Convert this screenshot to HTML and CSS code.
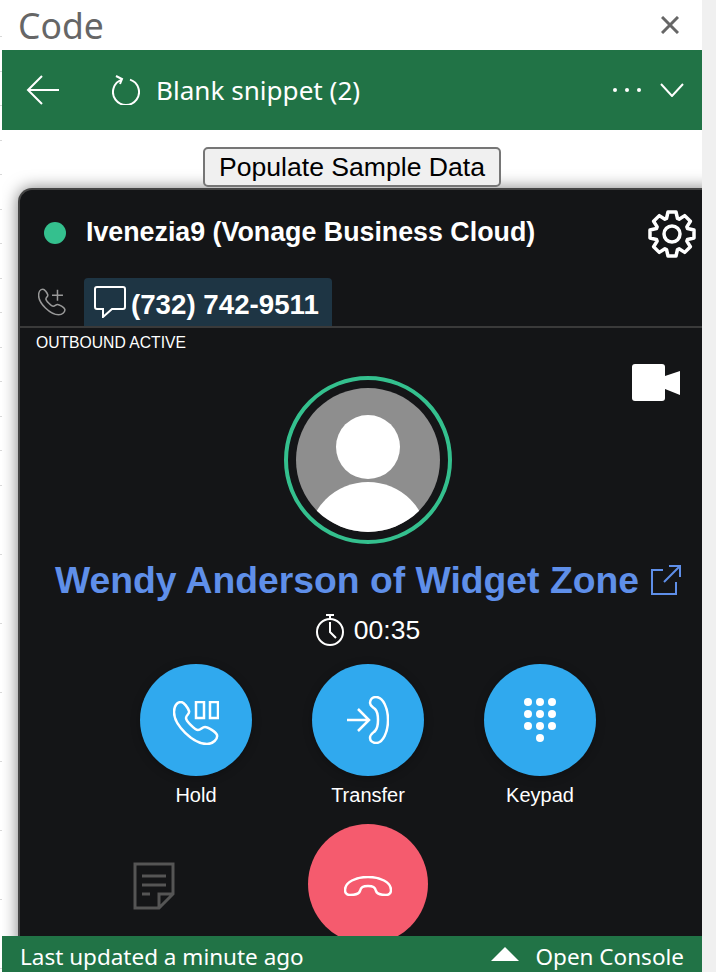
FILE: index.html
```html
<!DOCTYPE html>
<html lang="en">
<head>
    <meta charset="UTF-8">
    <title>Code</title>
    <link rel="stylesheet" href="styles.css">
</head>
<body>
    <div id="app">
        <div id="sheet-edge"></div>
        <div id="pane">
            <div id="title-row">
                <span id="title">Code</span>
                <svg class="close" width="18" height="18" viewBox="0 0 18 18"><path d="M1 1L17 17M17 1L1 17"/></svg>
            </div>
            <div id="snippet-bar">
                <svg class="line-icon back" width="34" height="30" viewBox="0 0 34 30"><path d="M33 15H2M16 1L2 15L16 29"/></svg>
                <svg class="line-icon refresh" width="28" height="30" viewBox="0 0 28 30"><path d="M18 4.600A13 13 0 1 1 10 4.600M4 1L10 4L8 9"/></svg>
                <span id="snippet-name">Blank snippet (2)</span>
                <svg class="more" width="30" height="6" viewBox="0 0 30 6"><circle cx="3" cy="3" r="2"/><circle cx="15" cy="3" r="2"/><circle cx="27" cy="3" r="2"/></svg>
                <svg class="line-icon chevron" width="24" height="14" viewBox="0 0 24 14"><path d="M1 1L12 13L23 1"/></svg>
            </div>
            <div id="content">
                <div id="sample-row"><button id="sample-btn">Populate Sample Data</button></div>
                <div id="phone">
                    <div class="phone-head">
                        <span class="dot"></span>
                        <span class="agent">Ivenezia9 (Vonage Business Cloud)</span>
                        <svg class="gear" width="48" height="48" viewBox="-24 -24 48 48">
                            <path d="M-5.500-15.500L-4-22L4-22L5.500-15.500L7.070-14.850L12.730-18.380L18.380-12.730L14.850-7.070L15.500-5.500L22-4L22 4L15.500 5.500L14.850 7.070L18.380 12.730L12.730 18.380L7.070 14.850L5.500 15.500L4 22L-4 22L-5.500 15.500L-7.070 14.850L-12.730 18.380L-18.380 12.730L-14.850 7.070L-15.500 5.500L-22 4L-22-4L-15.500-5.500L-14.850-7.070L-18.380-12.730L-12.730-18.380L-7.070-14.850Z"/>
                            <circle r="8"/>
                        </svg>
                    </div>
                    <div class="tabs">
                        <svg class="new-call" width="28" height="28" viewBox="0 0 46 44"><path d="M8 1C4 1 1 5 1 11C1 24 20 43 34 43C40 43 45 38 44 34C43 31 35 26 32 26C29 26 28 29 25 29C22 29 13 20 13 17C13 14 17 13 16 10C15 7 11 1 8 1Z"/><path d="M32 2V20M23 11H41"/></svg>
                        <div class="tab">
                            <svg class="chat" width="32" height="32" viewBox="0 0 32 32"><path d="M3 1H29Q31 1 31 3V21Q31 23 29 23H18L9 31V23H3Q1 23 1 21V3Q1 1 3 1Z"/></svg>
                            <span>(732) 742-9511</span>
                        </div>
                    </div>
                    <div class="call-state">OUTBOUND ACTIVE</div>
                    <div class="call-body">
                        <svg class="video" width="48" height="37" viewBox="0 0 48 37"><rect width="33" height="37" rx="3"/><path d="M33 12L48 7V31L33 25Z"/></svg>
                        <div class="ring">
                            <svg width="144" height="144" viewBox="0 0 144 144">
                                <defs><clipPath id="face"><circle cx="72" cy="72" r="72"/></clipPath></defs>
                                <g clip-path="url(#face)">
                                    <rect class="avatar-bg" width="144" height="144"/>
                                    <circle class="avatar-fg" cx="72" cy="59" r="32"/>
                                    <circle class="avatar-fg" cx="72" cy="154" r="60"/>
                                </g>
                            </svg>
                        </div>
                        <div class="contact">
                            <span>Wendy Anderson of Widget Zone</span>
                            <svg class="ext" width="30" height="30" viewBox="0 0 30 30"><path d="M12 5H1V29H25V17M13 17L29 1M18 1H29V12"/></svg>
                        </div>
                        <div class="timer">
                            <svg width="28" height="32" viewBox="0 0 28 32"><circle cx="14" cy="18" r="13"/><path d="M14 5V1M10 1H18M14 8V18L20 24"/></svg>
                            <span>00:35</span>
                        </div>
                        <div class="actions">
                            <div class="action">
                                <div class="round">
                                    <svg class="hold" width="46" height="44" viewBox="0 0 46 44"><path d="M8 1C4 1 1 5 1 11C1 24 20 43 34 43C40 43 45 38 44 34C43 31 35 26 32 26C29 26 28 29 25 29C22 29 13 20 13 17C13 14 17 13 16 10C15 7 11 1 8 1Z"/><rect x="23" y="1" width="8" height="16"/><rect x="37" y="1" width="8" height="16"/></svg>
                                </div>
                                <span>Hold</span>
                            </div>
                            <div class="action">
                                <div class="round">
                                    <svg width="42" height="48" viewBox="0 0 42 48"><path d="M29 1C25 1 23 4 23 7C23 10 26 11 28 13C30 15 31 20 31 24C31 28 30 33 28 35C26 37 23 38 23 42C23 45 26 47 29 47C36 47 41 36 41 24C41 12 36 1 29 1Z"/><path d="M0 24H22M11 13L22 24L11 35"/></svg>
                                </div>
                                <span>Transfer</span>
                            </div>
                            <div class="action">
                                <div class="round">
                                    <svg class="keypad" width="32" height="44" viewBox="0 0 32 44">
                                        <circle cx="4" cy="4" r="4"/><circle cx="16" cy="4" r="4"/><circle cx="28" cy="4" r="4"/>
                                        <circle cx="4" cy="16" r="4"/><circle cx="16" cy="16" r="4"/><circle cx="28" cy="16" r="4"/>
                                        <circle cx="4" cy="28" r="4"/><circle cx="16" cy="28" r="4"/><circle cx="28" cy="28" r="4"/>
                                        <circle cx="16" cy="40" r="4"/>
                                    </svg>
                                </div>
                                <span>Keypad</span>
                            </div>
                        </div>
                        <div class="end-row">
                            <svg class="notes" width="42" height="48" viewBox="0 0 42 48"><path d="M2 2H40V32L26 46H2ZM26 46V32H40M9 14H33M9 23H33M9 32H17"/></svg>
                            <div class="end-call">
                                <svg width="48" height="20" viewBox="0 0 48 20"><path d="M1 14C1 6 12 1 24 1C36 1 47 6 47 14C47 17 45 19 42 19C38 19 33 18 32 15C31 11 29 10 24 10C19 10 17 11 16 15C15 18 10 19 6 19C3 19 1 17 1 14Z"/></svg>
                            </div>
                        </div>
                    </div>
                </div>
            </div>
            <div id="status-bar">
                <span>Last updated a minute ago</span>
                <div id="console-link">
                    <span class="tri"></span>
                    <span>Open Console</span>
                </div>
            </div>
        </div>
        <div id="side-strip"></div>
    </div>
</body>
</html>
```

FILE: styles.css
```css
*{
    margin: 0;
    padding: 0;
    box-sizing: border-box;
}
html,body{
    width: 716px;
    height: 972px;
    overflow: hidden;
    background: #fff;
}
svg{
    display: block;
    fill: none;
}
#app{
    display: flex;
    height: 972px;
    font-family: "Noto Sans", "Open Sans", sans-serif;
}
#sheet-edge{
    width: 2px;
    margin-top: 3px;
    background: repeating-linear-gradient(#fff 0, #fff 33.5px, #d8d8d8 33.5px, #d8d8d8 34.5px);
}
#pane{
    width: 700px;
    display: flex;
    flex-direction: column;
}
#side-strip{
    flex: 1;
    background: #f0f0f0;
}

/* top of the task pane */
#title-row{
    height: 50px;
    display: flex;
    align-items: center;
    justify-content: space-between;
    padding: 0 23px 0 16px;
}
#title{
    font-size: 35.5px;
    color: #666;
}
.close path{
    stroke: #666;
    stroke-width: 3;
}
#snippet-bar{
    height: 80px;
    background: #217346;
    display: flex;
    align-items: center;
    color: #fff;
    padding-left: 24px;
}
.line-icon path{
    stroke: #fff;
    stroke-width: 2;
}
.refresh{
    margin-left: 52px;
}
#snippet-name{
    margin-left: 16px;
    font-size: 26.100px;
    flex: 1;
}
.more{
    fill: #fff;
}
.chevron{
    margin: 0 18px 0 18px;
}

#content{
    flex: 1;
    min-height: 0;
    overflow: hidden;
}
#sample-row{
    height: 58px;
    padding-top: 17px;
    text-align: center;
}
#sample-btn{
    width: 298px;
    height: 40px;
    font: 26.600px "Liberation Sans", Arial, sans-serif;
    color: #000;
    background: #f0f0f0;
    border: 2px solid #767676;
    border-radius: 5px;
}

/* softphone */
#phone{
    width: 698px;
    height: 760px;
    margin-left: 16px;
    background: #141517;
    border: solid #444;
    border-width: 2px 0 0 2px;
    border-radius: 14px 0 0 0;
    box-shadow: 0 0 16px rgba(0,0,0,.5);
    font-family: "Liberation Sans", Arial, sans-serif;
    color: #fff;
}
.phone-head{
    height: 88px;
    display: flex;
    align-items: center;
    padding: 0 20px 0 24px;
}
.dot{
    width: 22px;
    height: 22px;
    border-radius: 50%;
    background: #34c08e;
    margin-bottom: 3px;
}
.agent{
    margin: 0 0 3px 20px;
    flex: 1;
    font-size: 26.800px;
    font-weight: bold;
}
.gear path,.gear circle{
    stroke: #fff;
    stroke-width: 3.500;
    stroke-linejoin: round;
}
.tabs{
    height: 50px;
    display: flex;
    align-items: flex-end;
    padding-left: 18px;
    border-bottom: 2px solid #3a3a3a;
}
.new-call{
    margin-bottom: 10px;
}
.new-call path{
    stroke: #999;
    stroke-width: 2.500;
}
.tab{
    width: 248px;
    height: 48px;
    margin-left: 18px;
    display: flex;
    align-items: center;
    gap: 5px;
    padding-left: 10px;
    background: #1e3544;
    border-radius: 4px 4px 0 0;
    font-size: 27.700px;
    font-weight: bold;
}
.tab span{
    padding-top: 5px;
}
.chat path{
    stroke: #fff;
    stroke-width: 2;
}
.call-state{
    height: 28px;
    line-height: 30px;
    padding-left: 16px;
    font-size: 15.700px;
}
.call-body{
    position: relative;
    padding-top: 20px;
    display: flex;
    flex-direction: column;
    align-items: center;
}
.video{
    position: absolute;
    top: 8px;
    right: 36px;
    fill: #fff;
}
.ring{
    width: 168px;
    height: 168px;
    padding: 8px;
    border: 4px solid #34c08e;
    border-radius: 50%;
}
.avatar-bg{
    fill: #8e8e8e;
}
.avatar-fg{
    fill: #fff;
}
.contact{
    height: 44px;
    margin-top: 14px;
    display: flex;
    align-items: center;
    gap: 12px;
    font-size: 37.300px;
    font-weight: bold;
    color: #5f8fe9;
}
.ext path{
    stroke: #5f8fe9;
    stroke-width: 2;
}
.timer{
    height: 32px;
    margin-top: 12px;
    display: flex;
    align-items: center;
    gap: 10px;
    font-size: 26.500px;
}
.timer path,.timer circle{
    stroke: #fff;
    stroke-width: 2;
}
.actions{
    margin-top: 18px;
    display: flex;
    gap: 60px;
}
.action{
    width: 112px;
    display: flex;
    flex-direction: column;
    align-items: center;
    font-size: 20px;
}
.action span{
    height: 22px;
    line-height: 22px;
    margin-top: 8px;
}
.round{
    width: 112px;
    height: 112px;
    border-radius: 50%;
    background: #30a9ee;
    display: flex;
    align-items: center;
    justify-content: center;
    box-shadow: 0 2px 10px rgba(0,0,0,.25);
}
.round path,.round rect{
    stroke: #fff;
    stroke-width: 2.500;
}
.hold{
    margin-top: 6px;
}
.keypad{
    fill: #fff;
}
.end-row{
    align-self: stretch;
    margin-top: 18px;
    display: grid;
    grid-template-columns: 1fr auto 1fr;
    align-items: start;
}
.notes{
    justify-self: end;
    margin: 38px 133px 0 0;
}
.notes path{
    stroke: #555;
    stroke-width: 3;
}
.end-call{
    width: 120px;
    height: 120px;
    padding-top: 3px;
    border-radius: 50%;
    background: #f55b6e;
    display: flex;
    align-items: center;
    justify-content: center;
}
.end-call path{
    stroke: #fff;
    stroke-width: 2.500;
}

#status-bar{
    height: 36px;
    flex: none;
    background: #217346;
    color: #fff;
    display: flex;
    align-items: center;
    justify-content: space-between;
    padding: 5px 18px 0;
    font-size: 22.500px;
    position: relative;
}
#console-link{
    display: flex;
    align-items: center;
    gap: 17px;
}
.tri{
    border: solid transparent;
    border-width: 0 14px 14px;
    border-bottom-color: #fff;
    margin-bottom: 5px;
}
```
